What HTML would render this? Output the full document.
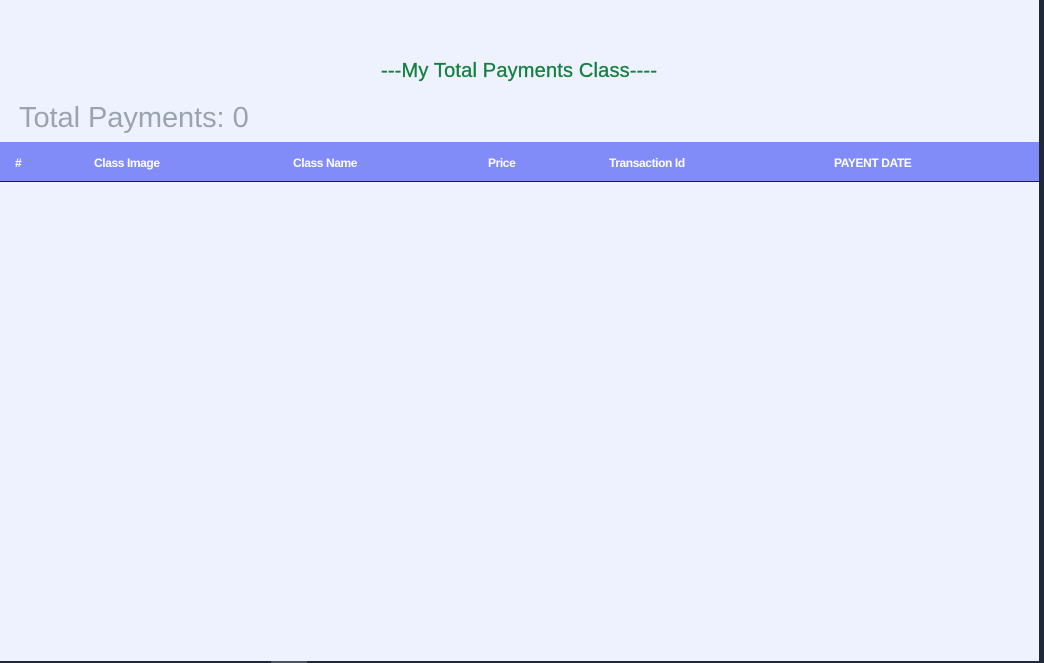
<!DOCTYPE html>
<html><head><style>
body{margin:0;width:1044px;height:663px;background:#eef2ff;position:relative;overflow:hidden;font-family:"Liberation Sans",sans-serif;}
.t{position:absolute;white-space:nowrap;}
.h{position:absolute;top:142px;left:0;width:1039px;height:39px;background:#818cf8;border-bottom:1px solid #1e1b4b;}
.c{position:absolute;top:156px;color:#fff;font-weight:bold;font-size:12px;letter-spacing:-0.4px;}
</style></head><body>
<div class="t" style="left:381px;top:60px;font-size:20px;color:#15803d;letter-spacing:0.18px;-webkit-text-stroke:0.3px #15803d;">---My Total Payments Class----</div>
<div class="t" style="left:19px;top:102px;font-size:29px;color:#9ca3af;letter-spacing:-0.05px;">Total Payments: 0</div>
<div class="h"></div>
<div class="t c" style="left:15px">#</div>
<div class="t c" style="left:94px">Class Image</div>
<div class="t c" style="left:293px">Class Name</div>
<div class="t c" style="left:488px">Price</div>
<div class="t c" style="left:609px">Transaction Id</div>
<div class="t c" style="left:834px">PAYENT DATE</div>
<div style="position:absolute;right:0;top:0;width:5px;height:663px;background:#1f2937;"></div>
<div style="position:absolute;left:0;bottom:0;width:1044px;height:2px;background:#1f2937;"></div>
<div style="position:absolute;left:271px;bottom:0;width:36px;height:2px;background:#4b5563;"></div>
</body></html>
